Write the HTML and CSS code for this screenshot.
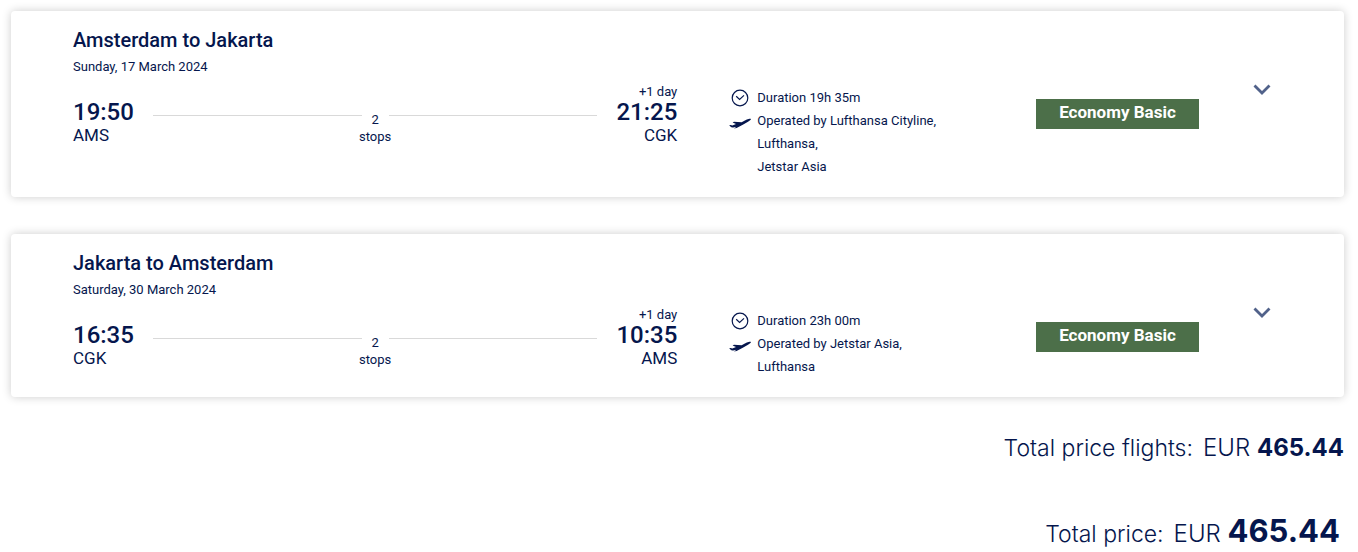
FILE: index.html
```html
<!DOCTYPE html>
<html lang="en">
<head>
<meta charset="utf-8">
<meta name="viewport" content="width=device-width, initial-scale=1">
<title>Flight summary</title>
<link rel="stylesheet" href="styles.css">
</head>
<body>
<svg class="sprite" aria-hidden="true">
  <symbol id="clock" viewBox="0 0 18 18"><circle cx="9" cy="9" r="7.8" fill="none" stroke="currentColor" stroke-width="1.2"/><path d="M5.2 7.2 8.6 10.4 13 6.4" fill="none" stroke="currentColor" stroke-width="1.2"/></symbol>
  <symbol id="plane" viewBox="0 0 22 11"><path d="M0.2 7.2 1.5 6.9 3.4 7.6 7 6.1 3.6 4.5 5 3.8 12.6 4.3 17.8 1.6C19.6.7 21.5.4 21.9.9 22.1 1.7 20.7 2.9 19 3.8L13.8 6.7 7.6 10 5 10.4 7.4 8.8 4.2 9.5C3 9.7 2 9.2 1.4 8.6Z" fill="currentColor"/></symbol>
  <symbol id="chevron" viewBox="0 0 18 12"><path d="M1.5 1.5 9 9.1 16.5 1.5" fill="none" stroke="currentColor" stroke-width="2.8"/></symbol>
</svg>
<main class="page">
  <article class="card">
    <header class="card-header">
      <h2 class="route">Amsterdam to Jakarta</h2>
      <p class="date">Sunday, 17 March 2024</p>
    </header>
    <div class="flight">
      <div class="point">
        <time class="time">19:50</time>
        <span class="airport">AMS</span>
      </div>
      <div class="track">
        <span class="line"></span>
        <span class="stops"><span>2</span><span>stops</span></span>
        <span class="line"></span>
      </div>
      <div class="point arrival">
        <span class="day">+1 day</span>
        <time class="time">21:25</time>
        <span class="airport">CGK</span>
      </div>
    </div>
    <ul class="details">
      <li class="detail"><svg class="icon-clock" aria-hidden="true"><use href="#clock"/></svg><span>Duration 19h 35m</span></li>
      <li class="detail"><svg class="icon-plane" aria-hidden="true"><use href="#plane"/></svg><span>Operated by Lufthansa Cityline,<br>Lufthansa,<br>Jetstar Asia</span></li>
    </ul>
    <span class="fare">Economy Basic</span>
    <button class="toggle" type="button" aria-label="Show flight details"><svg class="icon-chevron" aria-hidden="true"><use href="#chevron"/></svg></button>
  </article>

  <article class="card">
    <header class="card-header">
      <h2 class="route">Jakarta to Amsterdam</h2>
      <p class="date">Saturday, 30 March 2024</p>
    </header>
    <div class="flight">
      <div class="point">
        <time class="time">16:35</time>
        <span class="airport">CGK</span>
      </div>
      <div class="track">
        <span class="line"></span>
        <span class="stops"><span>2</span><span>stops</span></span>
        <span class="line"></span>
      </div>
      <div class="point arrival">
        <span class="day">+1 day</span>
        <time class="time">10:35</time>
        <span class="airport">AMS</span>
      </div>
    </div>
    <ul class="details">
      <li class="detail"><svg class="icon-clock" aria-hidden="true"><use href="#clock"/></svg><span>Duration 23h 00m</span></li>
      <li class="detail"><svg class="icon-plane" aria-hidden="true"><use href="#plane"/></svg><span>Operated by Jetstar Asia,<br>Lufthansa</span></li>
    </ul>
    <span class="fare">Economy Basic</span>
    <button class="toggle" type="button" aria-label="Show flight details"><svg class="icon-chevron" aria-hidden="true"><use href="#chevron"/></svg></button>
  </article>

  <section class="totals">
    <p class="total"><span class="label">Total price flights:</span><span>EUR <strong>465.44</strong></span></p>
    <p class="total grand"><span class="label">Total price:</span><span>EUR <strong>465.44</strong></span></p>
  </section>
</main>
</body>
</html>
```
FILE: styles.css
```css
* { box-sizing: border-box; }
body {
  margin: 0;
  background: #fff;
  color: #05164d;
  font-family: Roboto, "Liberation Sans", sans-serif;
  font-size: 13px;
}
h2, p, ul { margin: 0; padding: 0; }
.sprite { display: none; }
.page { padding: 11px 14px 0 11px; }

.card {
  display: grid;
  grid-template-columns: 605fr 251fr 163px 18px;
  column-gap: 54px;
  align-items: start;
  padding: 16px 73px 19px 62px;
  border-radius: 4px;
  background: #fff;
  box-shadow: 0 0 10px rgba(0, 0, 0, 0.2);
}
.card + .card { margin-top: 37px; }
.card-header { grid-column: 1 / -1; padding-bottom: 4px; }
.route { font-size: 20px; font-weight: 500; line-height: 26px; }
.date { line-height: 27px; }

.flight { display: flex; padding-top: 1px; }
.point { display: flex; flex-direction: column; padding-top: 14px; }
.arrival { align-items: flex-end; padding-top: 0; }
.day { line-height: 14px; }
.time { font-size: 24px; font-weight: 500; line-height: 26px; }
.airport { font-size: 17px; line-height: 20px; }
.track { flex: 1; display: flex; margin: 0 19px; padding-top: 26px; }
.line { flex: 1; height: 1px; margin-top: 4px; background: #d9d9d9; }
.stops {
  display: flex;
  flex-direction: column;
  align-items: center;
  width: 27px;
  line-height: 17px;
}

.details { padding-top: 2px; list-style: none; line-height: 23px; }
.detail { display: grid; grid-template-columns: 18px 1fr; column-gap: 8px; }
.icon-clock { width: 18px; height: 18px; margin-top: 3px; }
.icon-plane { width: 22px; height: 11px; margin: 9px 0 0 -2px; }

.fare {
  margin-top: 15px;
  padding-bottom: 4px;
  background: #4c6f49;
  color: #fff;
  font-size: 17px;
  font-weight: 700;
  line-height: 26px;
  text-align: center;
}
.toggle {
  display: flex;
  padding: 0;
  border: 0;
  background: none;
  color: #51628a;
  cursor: pointer;
}
.icon-chevron { width: 18px; height: 12px; }

.totals { padding-top: 35px; font-family: Inter, "Liberation Sans", sans-serif; font-size: 24px; font-weight: 300; }
.total { display: flex; justify-content: flex-end; align-items: baseline; gap: 10px; line-height: 32px; }
.label { font-size: 23px; }
.total strong { font-weight: 700; }
.grand { padding: 47px 4px 0 0; line-height: 40px; }
.grand strong { font-size: 31px; }
```
